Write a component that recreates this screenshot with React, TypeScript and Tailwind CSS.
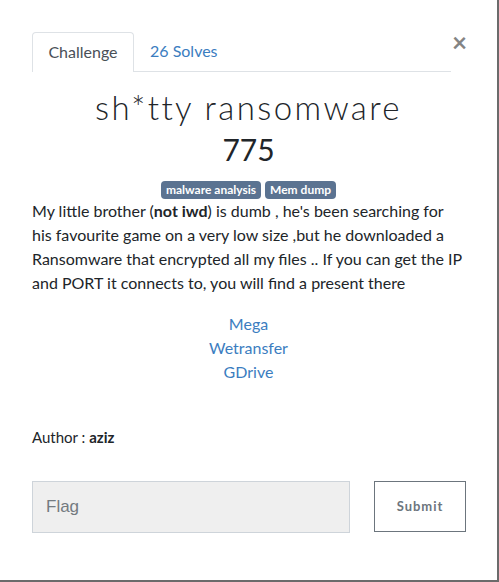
import React from "react";

export default function App() {
  return (
    <div
      className="relative w-[499px] h-[582px] bg-white border-r-2 border-b-2 border-[#6b6b6b] text-[#212529]"
      style={{ fontFamily: "Lato, 'Open Sans', sans-serif" }}
    >
      <div className="pl-8 pr-[31px] pt-8">
        <div className="flex items-start">
          <div className="flex w-[420px] border-b border-[#dee2e6] h-[40px]">
            <div className="h-[40px] w-[102px] border border-b-0 border-[#dee2e6] rounded-t-[4px] bg-white flex items-center justify-center pb-[2px] text-[16px] text-[#495057] -mb-px">
              Challenge
            </div>
            <div className="h-[40px] px-4 pb-[2px] flex items-center text-[16px] text-[#3b7dbf]">26 Solves</div>
          </div>
          <div className="ml-[1px] -mt-[2px] text-[26px] leading-[24px] font-bold text-[#848484] w-[14px]">×</div>
        </div>

        <div className="flex flex-col items-center pr-px">
          <div
            className="mt-[11px] text-[33px] leading-[48px] tracking-[2.4px] text-[#212529]"
            style={{ fontFamily: "Lato, sans-serif", fontWeight: 300 }}
          >
            sh*tty ransomware
          </div>
          <div className="mt-[-2px] text-[30px] leading-[40px] text-[#212529]">775</div>
          <div className="mt-[12px] flex gap-[4px]">
            <span className="h-[18px] px-[5px] rounded-[4px] bg-[#5b7391] text-white text-[12px] font-bold leading-[18px]">malware analysis</span>
            <span className="h-[18px] px-[5px] rounded-[4px] bg-[#5b7391] text-white text-[12px] font-bold leading-[18px]">Mem dump</span>
          </div>
        </div>

        <p className="mt-0 pr-px text-[16px] leading-[24px] text-[#212529]">
          My little brother (<b>not iwd</b>) is dumb , he's been searching for his favourite game on a very low size ,but he downloaded a Ransomware that encrypted all my files .. If you can get the IP and PORT it connects to, you will find a present there
        </p>

        <div className="mt-[17px] pr-px flex flex-col items-center text-[16px] leading-[24px] text-[#3b7dbf]">
          <span>Mega</span>
          <span>Wetransfer</span>
          <span>GDrive</span>
        </div>

        <div className="mt-[41px] text-[15px] leading-[24px] text-[#212529]">
          Author : <b>aziz</b>
        </div>

        <div className="mt-[32px] flex items-start">
          <div
            className="w-[318px] shrink-0 h-[52px] bg-[#efefef] border border-[#ced4da] flex items-center pl-[13px] text-[17px] text-[#737a80]"
            style={{ fontFamily: "'Liberation Sans', Arial, sans-serif" }}
          >
            Flag
          </div>
          <div className="ml-[24px] w-[92px] shrink-0 h-[51px] border border-[#6c757d] flex items-center justify-center text-[13px] font-bold tracking-[1px] text-[#6c757d]">
            Submit
          </div>
        </div>
      </div>
    </div>
  );
}
